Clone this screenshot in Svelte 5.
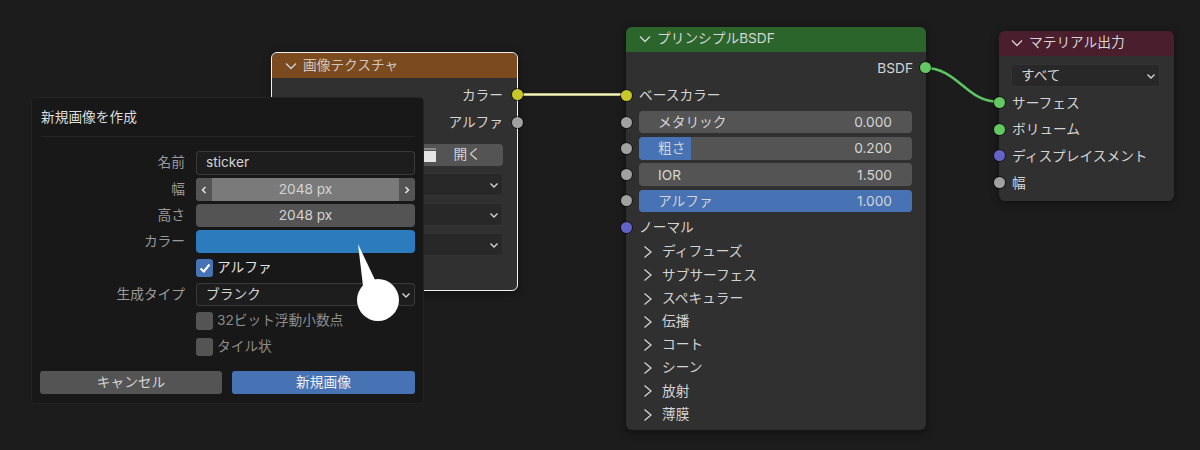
<script lang="ts">
  const sliders = [
    { label: 'メタリック', value: '0.000', pct: 0 },
    { label: '粗さ', value: '0.200', pct: 19 },
    { label: 'IOR', value: '1.500', pct: 0 },
    { label: 'アルファ', value: '1.000', pct: 100 }
  ];
  const panels = ['ディフューズ', 'サブサーフェス', 'スペキュラー', '伝播', 'コート', 'シーン', '放射', '薄膜'];
  const outputs = [
    { label: 'サーフェス', kind: 'green' },
    { label: 'ボリューム', kind: 'green' },
    { label: 'ディスプレイスメント', kind: 'purple' },
    { label: '幅', kind: 'gray' }
  ];
</script>

{#snippet chevDown(size = 14)}
  <svg class="chev" width={size} height={size} viewBox="0 0 14 14"><path d="M2 4.5 7 9.5 12 4.5" /></svg>
{/snippet}

{#snippet selectArrow()}
  <svg class="sel-arrow" width="10" height="10" viewBox="0 0 10 10"><path d="M1.5 3.5 5 7 8.5 3.5" /></svg>
{/snippet}

<div class="canvas">
  <svg class="wires" width="1200" height="450" viewBox="0 0 1200 450">
    <path d="M517 94.5 L626 94.5" stroke="#8f8f3c" stroke-width="3" fill="none" />
    <path d="M517 94.5 L626 94.5" stroke="#f3f3cc" stroke-width="2" fill="none" />
    <path d="M925 68 C958 68 966 102 999 102" stroke="#5fc462" stroke-width="2.5" fill="none" />
  </svg>

  <section class="node image-node">
    <header class="node-head brown">{@render chevDown()}<span>画像テクスチャ</span></header>
    <div class="node-body">
      <div class="row out">カラー<i class="sock right yellow"></i></div>
      <div class="row out">アルファ<i class="sock right gray"></i></div>
      <div class="open-btn">
        <svg width="16" height="16" viewBox="0 0 16 16"><path d="M1 1h14v2H1z" fill="#8a8a8a" /><path d="M1 4h14v11H1z" fill="#e4e4e4" /></svg>
        <span>開く</span>
      </div>
      <div class="fake-select">{@render selectArrow()}</div>
      <div class="fake-select">{@render selectArrow()}</div>
      <div class="fake-select">{@render selectArrow()}</div>
    </div>
  </section>

  <section class="node bsdf-node">
    <header class="node-head green-head">{@render chevDown()}<span>プリンシプルBSDF</span></header>
    <div class="node-body">
      <div class="row out">BSDF<i class="sock right green"></i></div>
      <div class="row in base">ベースカラー<i class="sock left yellow"></i></div>
      {#each sliders as s}
        <div class="slider-row">
          <i class="sock left gray"></i>
          <div class="slider">
            <div class="slider-fill" style="width: {s.pct}%"></div>
            <span class="slider-label">{s.label}</span>
            <span class="slider-value">{s.value}</span>
          </div>
        </div>
      {/each}
      <div class="row in normal">ノーマル<i class="sock left purple"></i></div>
      {#each panels as p}
        <div class="panel">
          <svg width="14" height="14" viewBox="0 0 14 14"><path d="M3.5 1.5 10 7 3.5 12.5" /></svg>
          <span>{p}</span>
        </div>
      {/each}
    </div>
  </section>

  <section class="node output-node">
    <header class="node-head wine">{@render chevDown()}<span>マテリアル出力</span></header>
    <div class="node-body">
      <div class="target"><span>すべて</span>{@render selectArrow()}</div>
      {#each outputs as o}
        <div class="row in">{o.label}<i class="sock left {o.kind}"></i></div>
      {/each}
    </div>
  </section>

  <section class="dialog">
    <h2>新規画像を作成</h2>
    <div class="form">
      <span class="lbl">名前</span>
      <div class="field text">sticker</div>
      <span class="lbl">幅</span>
      <div class="field num hover">
        <span class="step"><svg width="8" height="10" viewBox="0 0 8 10"><path d="M5.5 2 2.5 5 5.5 8" /></svg></span>
        <span class="num-val">2048 px</span>
        <span class="step"><svg width="8" height="10" viewBox="0 0 8 10"><path d="M2.5 2 5.5 5 2.5 8" /></svg></span>
      </div>
      <span class="lbl">高さ</span>
      <div class="field num"><span class="num-val">2048 px</span></div>
      <span class="lbl">カラー</span>
      <div class="field swatch"></div>
      <span></span>
      <div class="check on">
        <span class="box">
          <svg width="14" height="14" viewBox="0 0 14 14"><path d="M2.5 7.5 5.8 10.5 11.5 3.5" /></svg>
        </span>
        アルファ
      </div>
      <span class="lbl">生成タイプ</span>
      <div class="field text select">ブランク{@render selectArrow()}</div>
      <span></span>
      <div class="check"><span class="box"></span>32ビット浮動小数点</div>
      <span></span>
      <div class="check"><span class="box"></span>タイル状</div>
    </div>
    <div class="actions">
      <div class="btn cancel">キャンセル</div>
      <div class="btn primary">新規画像</div>
    </div>
  </section>

  <svg class="pointer" width="1200" height="450" viewBox="0 0 1200 450">
    <path d="M358 244 L376 282 L363 286 Z" fill="#fff" />
    <circle cx="378" cy="300" r="21" fill="#fff" />
  </svg>
</div>

<style>
  :global(body) { margin: 0; background: #1c1c1c; }
  .canvas {
    position: relative;
    width: 1200px;
    height: 450px;
    overflow: hidden;
    background: #1c1c1c;
    color: #d4d4d4;
    font: 13.7px/1 Inter, "Noto Sans CJK JP", sans-serif;
  }
  .wires, .pointer { position: absolute; inset: 0; }
  .pointer { z-index: 5; }

  /* nodes sit on a free canvas */
  .node {
    position: absolute;
    box-sizing: border-box;
    background: #303030;
    border-radius: 6px;
    box-shadow: 0 2px 8px rgba(0, 0, 0, 0.45);
  }
  .image-node { left: 271px; top: 52px; width: 247px; height: 239px; outline: 1px solid #f0f0f0; outline-offset: -1px; z-index: 1; }
  .bsdf-node { left: 626px; top: 27px; width: 300px; height: 403px; }
  .output-node { left: 999px; top: 31px; width: 175px; height: 170px; }

  .node-head {
    display: flex;
    align-items: center;
    gap: 5px;
    height: 25px;
    padding: 0 0 2px 12px;
    border-radius: 6px 6px 0 0;
    box-sizing: border-box;
  }
  .brown { background: #7b4a1e; margin: 1px 1px 0; padding-bottom: 0; color: #cfc7bf; }
  .green-head { background: #2b652b; }
  .wine { background: #4a1e2c; padding-left: 11px; }
  .chev path { fill: none; stroke: #d4d4d4; stroke-width: 1.3; }

  .row {
    position: relative;
    display: flex;
    align-items: center;
    box-sizing: border-box;
    height: 23px;
    padding-top: 2px;
    margin-bottom: 4px;
  }
  .row.out { justify-content: flex-end; padding-right: 15px; }
  .row.in { padding-left: 13px; }

  .sock {
    position: absolute;
    top: 50%;
    width: 11px;
    height: 11px;
    margin-top: -5.5px;
    border-radius: 50%;
    box-shadow: 0 0 0 1px rgba(0, 0, 0, 0.5);
    z-index: 2;
  }
  .sock.left { left: -5.5px; }
  .sock.right { right: -4.5px; }
  .yellow { background: #c7c729; }
  .gray { background: #a1a1a1; }
  .green { background: #63c763; }
  .purple { background: #6363c7; }

  .image-node .node-body { padding-top: 5px; }
  .image-node .row.out:first-child { margin-bottom: 4.5px; }
  .open-btn {
    display: flex;
    align-items: center;
    gap: 17px;
    justify-content: flex-end;
    height: 22px;
    margin: 10.5px 15px 7px 15px;
    padding-right: 22px;
    background: #545454;
    border-radius: 4px;
  }
  .fake-select {
    display: flex;
    align-items: center;
    justify-content: flex-end;
    height: 23px;
    margin: 0 15px 7px;
    padding-right: 4px;
    box-sizing: border-box;
    background: #282828;
    border-radius: 4px;
    box-shadow: inset 0 0 0 1px #333;
  }
  .sel-arrow { flex: none; }
  .sel-arrow path { fill: none; stroke: #d4d4d4; stroke-width: 1.4; }

  .bsdf-node .node-body { padding-top: 4px; }
  .bsdf-node .row.out { margin-bottom: 4.5px; padding-right: 13px; }
  .slider-row {
    position: relative;
    display: flex;
    align-items: center;
    height: 23px;
    margin-bottom: 3.3px;
    padding: 0 14px 0 13px;
  }
  .slider {
    position: relative;
    flex: 1;
    display: flex;
    align-items: center;
    justify-content: space-between;
    box-sizing: border-box;
    height: 22.5px;
    padding: 2px 20px 0 19px;
    overflow: hidden;
    background: #545454;
    border-radius: 4px;
  }
  .slider-fill {
    position: absolute;
    left: 0;
    top: 0;
    bottom: 0;
    background: #4772b3;
  }
  .slider-label, .slider-value { position: relative; }
  .bsdf-node .normal { margin-bottom: 2px; }
  .panel {
    display: flex;
    align-items: center;
    gap: 7px;
    height: 23.2px;
    padding-left: 15px;
  }
  .panel svg path { fill: none; stroke: #d4d4d4; stroke-width: 1.3; }

  .output-node .node-body { padding-top: 8px; }
  .target {
    display: flex;
    align-items: center;
    justify-content: space-between;
    box-sizing: border-box;
    height: 23px;
    margin: 0 14px 4px 12px;
    padding: 1px 4px 0 10px;
    background: #282828;
    border-radius: 4px;
    box-shadow: inset 0 0 0 1px #333;
  }
  .output-node .row.in { margin-bottom: 3.7px; }

  .dialog {
    position: absolute;
    left: 32px;
    top: 98px;
    box-sizing: border-box;
    width: 391px;
    height: 305px;
    padding: 0 8px 0 9px;
    background: #181818;
    border-radius: 4px;
    box-shadow: 0 0 0 1px #232323;
    z-index: 3;
  }
  h2 {
    height: 38px;
    margin: 0 0 14px;
    line-height: 38px;
    font-size: 13.7px;
    font-weight: 400;
    color: #dedede;
    border-bottom: 1px solid #272727;
  }
  .form {
    display: grid;
    grid-template-columns: 144px 219px;
    grid-template-rows: 24px 23px 23px 23px 24px 23px 23px 23px;
    column-gap: 11px;
    row-gap: 3px;
  }
  .lbl {
    display: flex;
    align-items: center;
    justify-content: flex-end;
    color: #9a9a9a;
  }
  .field {
    display: flex;
    align-items: center;
    box-sizing: border-box;
    border-radius: 4px;
    overflow: hidden;
  }
  .field.text {
    justify-content: space-between;
    padding: 0 4px 0 10px;
    background: #1d1d1d;
    box-shadow: inset 0 0 0 1px #3a3a3a;
  }
  .field.num { justify-content: center; background: #545454; }
  .num-val { flex: 1; text-align: center; }
  .field.hover { background: #7a7a7a; }
  .step {
    width: 16px;
    height: 100%;
    display: flex;
    align-items: center;
    justify-content: center;
    background: #545454;
  }
  .step path { fill: none; stroke: #e6e6e6; stroke-width: 1.5; }
  .swatch { background: #2b7bbd; }
  .check {
    display: flex;
    align-items: center;
    gap: 4px;
    color: #8d8d8d;
  }
  .check.on { color: #e2e2e2; }
  .box {
    display: flex;
    align-items: center;
    justify-content: center;
    width: 17px;
    height: 18px;
    background: #545454;
    border-radius: 3px;
  }
  .check.on .box { background: #4772b3; }
  .box path { fill: none; stroke: #fff; stroke-width: 2; }
  .actions {
    display: grid;
    grid-template-columns: 182px 183px;
    column-gap: 10px;
    margin: 13px 0 0 -1px;
  }
  .btn {
    display: flex;
    align-items: center;
    justify-content: center;
    height: 23px;
    border-radius: 3px;
    background: #545454;
  }
  .btn.primary { background: #4772b3; color: #f0f0f0; }
</style>
